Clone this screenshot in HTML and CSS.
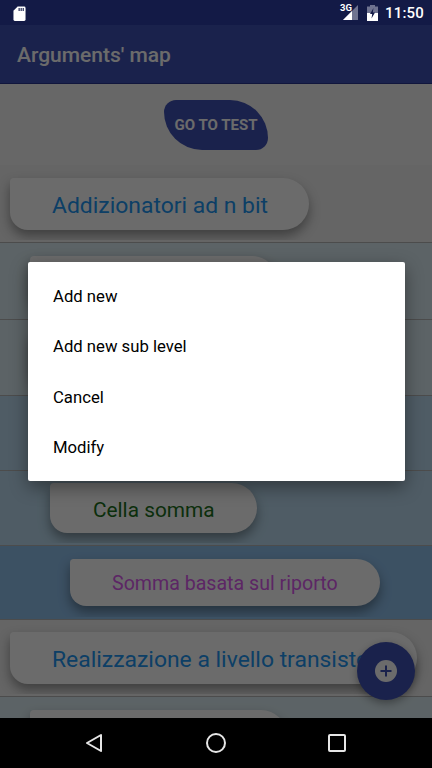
FILE: index.html
```html
<!DOCTYPE html>
<html lang="en">
<head>
<meta charset="utf-8">
<title>Arguments' map</title>
<link rel="stylesheet" href="styles.css">
</head>
<body>
<div class="phone">
  <div class="status">
    <svg class="sd" width="13" height="15" viewBox="0 0 14 16"><path fill="#fff" d="M5 .5h7a1.500 1.500 0 0 1 1.500 1.500v12.500a1.500 1.500 0 0 1-1.500 1.500H2a1.500 1.500 0 0 1-1.500-1.500V5z"/><path fill="#131a46" d="M6 2h1.200v3.200H6zM8.200 2h1.200v3.200H8.200zM10.400 2h1.200v3.200h-1.200z"/></svg>
    <span class="spacer"></span>
    <span class="net">3G</span>
    <svg class="signal" width="15" height="15" viewBox="0 0 15 15"><path fill="#6f7390" d="M15 0v15H0z"/><path fill="#fff" d="M9 6v9H0z"/></svg>
    <svg class="battery" width="11" height="16" viewBox="0 0 11 16"><path fill="#6f7390" d="M3 0h5v1.500h3V16H0V1.500h3z"/><path fill="#fff" d="M0 8h11v8H0z"/><path fill="#131a46" d="M6.500 3 3 9h2.200L4.500 13.500 8 7.500H5.800z"/></svg>
    <span class="time">11:50</span>
  </div>
  <div class="screen">
    <header class="appbar">Arguments' map</header>
    <div class="top">
      <div class="test">GO TO TEST</div>
    </div>
    <div class="row h78 l0"><div class="cell"><div class="pill p1 w299"><span class="t-blue">Addizionatori ad n bit</span></div></div></div>
    <div class="row h77 l1"><div class="cell"><div class="pill p2 w248"></div></div></div>
    <div class="row h76 l1"><div class="cell"><div class="pill p2 w248"></div></div></div>
    <div class="row h75 l2"><div class="cell"><div class="pill p3 w248"></div></div></div>
    <div class="row h75 l2"><div class="cell tight"><div class="pill p3 w207 short"><span class="t-green">Cella somma</span></div></div></div>
    <div class="row h74 l3"><div class="cell"><div class="pill p4 w310 shorter"><span class="t-purple">Somma basata sul riporto</span></div></div></div>
    <div class="row h77 l0"><div class="cell tight"><div class="pill p1 w407"><span class="t-blue">Realizzazione a livello transistor</span></div></div></div>
    <div class="row h77 l1"><div class="cell"><div class="pill p2 w257"></div></div></div>
    <div class="fab"><svg width="24" height="24" viewBox="0 0 24 24"><circle cx="12" cy="12" r="11" fill="#fff"/><path d="M12 6.500v11M6.500 12h11" stroke="#3f51b5" stroke-width="2"/></svg></div>
    <div class="scrim"></div>
    <div class="dialog">
      <div class="item">Add new</div>
      <div class="item">Add new sub level</div>
      <div class="item">Cancel</div>
      <div class="item">Modify</div>
    </div>
  </div>
  <nav class="navbar">
    <svg width="18" height="20" viewBox="0 0 18 20"><path d="M16 2 2 10l14 8z" fill="none" stroke="#e6e6e6" stroke-width="2" stroke-linejoin="round"/></svg>
    <svg width="20" height="20" viewBox="0 0 20 20"><circle cx="10" cy="10" r="9" fill="none" stroke="#e6e6e6" stroke-width="2"/></svg>
    <svg width="18" height="18" viewBox="0 0 18 18"><rect x="1" y="1" width="16" height="16" rx="1" fill="none" stroke="#e6e6e6" stroke-width="2"/></svg>
  </nav>
</div>
</body>
</html>
```
FILE: styles.css
```css
* { box-sizing: border-box; }
html, body { margin: 0; padding: 0; }
body { font-family: Roboto, "Liberation Sans", sans-serif; background: #000; }
.phone { width: 432px; height: 768px; display: flex; flex-direction: column; overflow: hidden; }

.status { height: 25px; flex: none; background: #131a46; display: flex; align-items: center; padding: 0 8px 0 13px; color: #fff; }
.sd { margin-top: 1px; }
.spacer { flex: 1; }
.net { font-size: 9.500px; font-weight: 700; line-height: 9px; margin-right: -9px; margin-top: -10px; position: relative; z-index: 1; }
.signal { margin-right: 9px; }
.battery { margin-right: 7px; }
.time { font-size: 15px; font-weight: 500; letter-spacing: .2px; }

.screen { position: relative; flex: 1; overflow: hidden; background: #f5f5f5; }
.appbar { height: 59px; background: #3f51b5; color: #fff; font-size: 21px; font-weight: 500; display: flex; align-items: center; padding: 2px 0 0 17px; border-bottom: 1px solid #2a3690; }
.top { height: 81px; padding-top: 16px; display: flex; justify-content: center; background: #f5f5f5; }
.test { width: 104px; height: 50px; background: #3f51b5; color: #fff; font-size: 15px; font-weight: 700; display: flex; align-items: center; justify-content: center; border-radius: 12px 38px 12px 38px; }

.row { display: flex; flex-direction: column; border-bottom: 1px solid #b5b5b5; }
.h78 { height: 78px; }
.h77 { height: 77px; }
.h76 { height: 76px; }
.h75 { height: 75px; }
.h74 { height: 74px; }
.l0 { background: #f0f0f0; }
.l1 { background: #dcecf2; }
.l2 { background: #bcdcf0; }
.l3 { background: #8fc0ec; }
.cell { flex: 1; margin-bottom: 2px; padding-top: 13px; overflow: hidden; }
.tight { padding-top: 12px; }

.pill { height: 52px; background: #fff; border-radius: 4px 26px 26px 18px; box-shadow: 0 6px 12px rgba(0,0,0,.38); display: flex; align-items: center; padding: 3px 0 0 42px; white-space: nowrap; overflow: hidden; }
.short { height: 50px; padding-left: 43px; }
.shorter { height: 47px; padding-top: 1px; }
.p1 { margin-left: 10px; }
.p2 { margin-left: 30px; }
.p3 { margin-left: 50px; }
.p4 { margin-left: 70px; }
.w299 { width: 299px; }
.w248 { width: 248px; }
.w207 { width: 207px; }
.w310 { width: 310px; }
.w407 { width: 407px; }
.w257 { width: 257px; }
.t-blue { color: #2196f3; font-size: 22.900px; }
.t-green { color: #1b7020; font-size: 20.800px; }
.t-purple { color: #dc5cf0; font-size: 19.600px; }

.fab { position: absolute; left: 357px; top: 617px; width: 58px; height: 58px; border-radius: 50%; background: #3f51b5; display: flex; align-items: center; justify-content: center; box-shadow: 0 3px 8px rgba(0,0,0,.35); }

.scrim { position: absolute; inset: 0; background: rgba(0,0,0,.58); }
.dialog { position: absolute; left: 28px; top: 237px; width: 377px; height: 219px; background: #fff; border-radius: 2px; padding: 9.500px 0; box-shadow: 0 6px 18px rgba(0,0,0,.4); }
.item { height: 50.300px; display: flex; align-items: center; padding-left: 25px; font-size: 16.700px; color: #000; }

.navbar { height: 50px; flex: none; background: #000; display: flex; align-items: center; }
.navbar svg:nth-child(1) { margin-left: 85px; }
.navbar svg:nth-child(2) { margin-left: 103px; }
.navbar svg:nth-child(3) { margin-left: 102px; }
```
